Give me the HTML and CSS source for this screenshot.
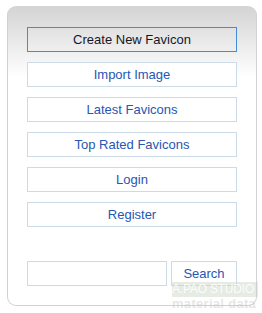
FILE: index.html
```html
<!DOCTYPE html>
<html lang="en">

<head>
    <meta charset="UTF-8">
    <title>Favicon Menu</title>
    <link rel="stylesheet" href="styles.css">
</head>

<body>
    <div class="panel">
        <a href="#" class="btn active">Create New Favicon</a>
        <a href="#" class="btn">Import Image</a>
        <a href="#" class="btn">Latest Favicons</a>
        <a href="#" class="btn">Top Rated Favicons</a>
        <a href="#" class="btn">Login</a>
        <a href="#" class="btn">Register</a>

        <form class="search" action="">
            <input type="text" name="q" class="search-box">
            <button type="button" class="search-btn">Search</button>
        </form>
    </div>

    <div class="mark">
        <span class="mark-top">A.PAO STUDIO</span>
        <span class="mark-bottom">material data</span>
    </div>
</body>

</html>
```

FILE: styles.css
```css
* {
    margin: 0;
    padding: 0;
    box-sizing: border-box;
    font-family: "Liberation Sans", Arial, sans-serif;
}

body {
    background-color: #fff;
    position: relative;
    height: 313px;
    overflow: hidden;
}

.panel {
    margin: 6px 0 0 7px;
    width: 250px;
    height: 300px;
    padding: 20px 19px 0 19px;
    border: 1px solid #d2d2d2;
    border-top-color: #d6d6d6;
    border-radius: 9px;
    background: linear-gradient(#d4d4d4, #fff 70px);
    display: flex;
    flex-direction: column;
    gap: 10px;
}

.btn {
    display: block;
    height: 25px;
    line-height: 23px;
    text-align: center;
    text-decoration: none;
    font-size: 13px;
    color: #2756b3;
    background-color: #fff;
    border: 1px solid #cddbe9;
}

.btn.active {
    color: #16162a;
    background-color: transparent;
    border-color: #3f8fd8;
}

.search {
    display: flex;
    gap: 4px;
    margin-top: 24px;
}

.search-box {
    width: 140px;
    height: 25px;
    border: 1px solid #cddbe9;
    background-color: #fff;
}

.search-btn {
    width: 66px;
    height: 25px;
    border: 1px solid #cddbe9;
    background-color: #fff;
    color: #2756b3;
    font-size: 13px;
}

.mark {
    position: absolute;
    left: 172px;
    top: 282px;
    width: 86px;
    display: flex;
    flex-direction: column;
    white-space: nowrap;
    pointer-events: none;
}

.mark-top {
    background-color: rgba(200, 210, 195, 0.45);
    color: rgba(255, 255, 255, 0.9);
    font-size: 12px;
    line-height: 15px;
    letter-spacing: -0.2px;
}

.mark-bottom {
    color: rgba(200, 200, 200, 0.45);
    font-size: 13px;
    font-weight: bold;
    line-height: 14px;
    letter-spacing: 0.3px;
}
```
